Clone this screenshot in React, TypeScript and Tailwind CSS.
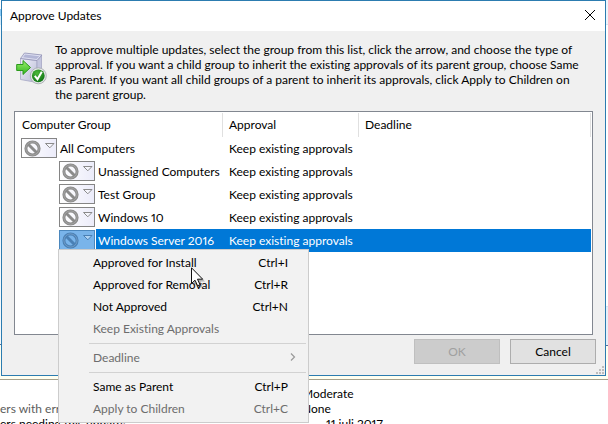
import React from 'react';
import clsx from 'clsx';

interface Group {
  name: string;
  child?: boolean;
  selected?: boolean;
}

interface MenuItem {
  label: string;
  shortcut?: string;
  disabled?: boolean;
  submenu?: boolean;
}

const GROUPS: Group[] = [
  { name: 'All Computers' },
  { name: 'Unassigned Computers', child: true },
  { name: 'Test Group', child: true },
  { name: 'Windows 10', child: true },
  { name: 'Windows Server 2016', child: true, selected: true },
];

const MENU_SECTIONS: MenuItem[][] = [
  [
    { label: 'Approved for Install', shortcut: 'Ctrl+I' },
    { label: 'Approved for Removal', shortcut: 'Ctrl+R' },
    { label: 'Not Approved', shortcut: 'Ctrl+N' },
    { label: 'Keep Existing Approvals', disabled: true },
  ],
  [{ label: 'Deadline', disabled: true, submenu: true }],
  [
    { label: 'Same as Parent', shortcut: 'Ctrl+P' },
    { label: 'Apply to Children', shortcut: 'Ctrl+C', disabled: true },
  ],
];

const ApproveIcon: React.FC = () => (
  <svg width="31" height="33" viewBox="0 0 31 33" className="shrink-0" aria-hidden="true">
    <defs>
      <linearGradient id="box" x1="0" y1="0" x2="1" y2="1">
        <stop offset="0" stopColor="#f0f0fa" />
        <stop offset="1" stopColor="#b9bbd6" />
      </linearGradient>
      <linearGradient id="arrow" x1="0" y1="0" x2="0" y2="1">
        <stop offset="0" stopColor="#9cf06c" />
        <stop offset="1" stopColor="#2fb41e" />
      </linearGradient>
      <radialGradient id="check" cx="0.4" cy="0.3" r="0.8">
        <stop offset="0" stopColor="#4cb83a" />
        <stop offset="1" stopColor="#0a6d12" />
      </radialGradient>
    </defs>
    <path d="M4.500 6.500L21 8.500V30.500L4.500 27.500Z" fill="url(#box)" stroke="#a4a6c4" strokeWidth="0.800" />
    <path d="M21 8.500L25.500 3.500V28L21 30.500Z" fill="#c3c5de" stroke="#a4a6c4" strokeWidth="0.800" />
    <path d="M4.500 6.500L8.500 1L26 3L21 8.500Z" fill="#dfe0f2" stroke="#8f91b4" strokeWidth="0.800" />
    <path d="M9 2.600L23.500 4.300L20.500 7L7 5.200Z" fill="#b3b6d6" />
    <path d="M0.700 12.500H7V8.500L14.500 15.500L7 22.500V18.500H0.700Z" fill="url(#arrow)" stroke="#2a9a1c" />
    <circle cx="22.300" cy="23.800" r="8" fill="#e4e6e8" stroke="#a0a4a8" strokeWidth="0.800" />
    <circle cx="22.300" cy="23.800" r="6.400" fill="url(#check)" />
    <path d="M18.800 23.800L21.500 27.300L25.800 19.800" fill="none" stroke="#fff" strokeWidth="2" />
  </svg>
);

const ApprovalButton: React.FC<{ group: Group }> = ({ group }) => (
  <button
    type="button"
    aria-label={`Approval for ${group.name}`}
    className={clsx(
      'flex h-5 w-9 items-start border pl-0.5 pt-px',
      group.selected
        ? 'border-[#4b87bd] bg-[#79b4ea] text-[#4a80b5]'
        : 'border-[#858585] bg-linear-to-r from-white to-[#ececfa] text-[#8b8b8b]',
    )}
  >
    <svg width="32" height="17" viewBox="0 0 32 17" fill="none" aria-hidden="true">
      <circle cx="8.500" cy="8.500" r="6.600" stroke="currentColor" strokeWidth="3" />
      <path d="M4 4L13 13" stroke="currentColor" strokeWidth="3" />
      <circle cx="8.500" cy="8.500" r="6.600" stroke="#fff" strokeOpacity="0.200" />
      <path d="M21.500 3.500H30L25.800 7.800Z" fill="#fff" fillOpacity="0.400" stroke="currentColor" />
    </svg>
  </button>
);

const Pointer: React.FC = () => (
  <svg
    width="16"
    height="22"
    viewBox="0 0 16 22"
    className="pointer-events-none absolute left-[132px] top-[17px]"
    aria-hidden="true"
  >
    <path d="M2.500 3V19L6 16L8.500 21L11.500 19.500L9.500 14.500H14Z" fill="#000" fillOpacity="0.250" />
    <path
      d="M0.500 0.800V16.500L4 13.200L6.600 18.800L9 17.700L6.500 12.200H11.700Z"
      fill="#fff"
      stroke="#111"
    />
  </svg>
);

const ApprovalMenu: React.FC = () => (
  <div
    role="menu"
    className="absolute -left-px top-[19px] z-10 w-[251px] border border-[#cccccc] bg-[#f2f2f2] p-0.5 text-black"
  >
    {MENU_SECTIONS.map((items, i) => (
      <React.Fragment key={items[0].label}>
        {i > 0 && <hr className="my-[3px] ml-7 border-[#d2d2d2]" />}
        {items.map((item) => (
          <button
            key={item.label}
            type="button"
            role="menuitem"
            disabled={item.disabled}
            className="flex h-[22px] w-full items-center justify-between pb-0.5 pl-8 pr-[18px] disabled:text-[#6d6d6d]"
          >
            <span>{item.label}</span>
            {item.shortcut && <span>{item.shortcut}</span>}
            {item.submenu && (
              <svg width="6" height="8" viewBox="0 0 6 8" className="-mr-2" fill="none" aria-hidden="true">
                <path d="M1 0.500L4.500 4L1 7.500" stroke="#9a9a9a" strokeWidth="1.200" />
              </svg>
            )}
          </button>
        ))}
      </React.Fragment>
    ))}
    <Pointer />
  </div>
);

const GroupTable: React.FC = () => (
  <table className="w-full table-fixed border-collapse">
    <colgroup>
      <col className="w-52" />
      <col className="w-34" />
      <col />
    </colgroup>
    <thead>
      <tr className="text-left">
        {['Computer Group', 'Approval', 'Deadline'].map((title, i) => (
          <th key={title} className="h-[25px] p-0 font-normal">
            <div
              className={clsx('h-6 border-r border-[#e0e0e0] leading-6', i === 0 ? 'pl-[7px]' : 'pl-1.5')}
            >
              {title}
            </div>
          </th>
        ))}
      </tr>
    </thead>
    <tbody>
      {GROUPS.map((group) => (
        <tr key={group.name} className={clsx(group.selected && 'text-white')}>
          <td className="p-0">
            <div className={clsx('flex h-[23px] gap-px', group.child ? 'pl-11' : 'pl-1.5')}>
              <div className="relative mt-px">
                <ApprovalButton group={group} />
                {group.selected && <ApprovalMenu />}
              </div>
              <span
                className={clsx(
                  'flex-1 whitespace-nowrap pl-0.5 leading-[23px]',
                  group.selected && 'bg-[#0078d7]',
                )}
              >
                {group.name}
              </span>
            </div>
          </td>
          <td className={clsx('whitespace-nowrap py-0 pl-1.5 pr-0', group.selected && 'bg-[#0078d7]')}>
            Keep existing approvals
          </td>
          <td className={clsx('p-0', group.selected && 'bg-[#0078d7]')} />
        </tr>
      ))}
    </tbody>
  </table>
);

// console window that shows round the edges of the dialog
const Backdrop: React.FC = () => (
  <div className="absolute inset-0 flex flex-col bg-white">
    <div className="flex h-[380px] justify-between border-b border-[#a5a08c] bg-[#fffff0]">
      <div className="flex w-4 flex-col">
        <div className="h-[9px] bg-white" />
        <div className="h-[7px] bg-[#8accf7]" />
        <div className="h-[9px] bg-[#d5ecfb]" />
        <div className="h-[320px] border-b border-[#5a6e96] bg-[#f4f9fd]" />
      </div>
      <div className="flex w-4 flex-col">
        <div className="h-[25px] border-b border-[#d5e5f3] bg-[#edf5fc]" />
        <div className="h-[281px] bg-white" />
        <div className="h-10 border-y border-b-[#5a6e96] border-t-[#d5e5f3] bg-[#e6f0f9]" />
      </div>
    </div>
    <div className="flex flex-1 overflow-hidden">
      <div className="w-[302px] pt-[21px] leading-[15px]">
        <p className="text-[#5c5c5c]">ers with errors:</p>
        <p>ers needing this update:</p>
      </div>
      <div className="pt-1.5 leading-[15px]">
        <p>Moderate</p>
        <p>None</p>
        <p className="pl-6">11 juli 2017</p>
      </div>
    </div>
  </div>
);

const SizeGrip: React.FC = () => (
  <svg width="8" height="8" viewBox="0 0 8 8" className="absolute bottom-px right-px" fill="#bdbdbd" aria-hidden="true">
    <path d="M6 0h2v2h-2zM3 3h2v2h-2zM6 3h2v2h-2zM0 6h2v2h-2zM3 6h2v2h-2zM6 6h2v2h-2z" />
  </svg>
);

const App: React.FC = () => {
  return (
    <div className="relative min-h-screen overflow-hidden font-[Lato,'Open_Sans',sans-serif] text-[12px] leading-[15px] text-black [font-feature-settings:'liga'_0,'pnum'_1]">
      <Backdrop />
      <div
        role="dialog"
        aria-labelledby="dialog-title"
        className="relative ml-px mr-0.5 border border-[#2c7cb0] bg-[#f0f0f0]"
      >
        <header className="flex h-[30px] items-center justify-between bg-white pb-0.5 pl-2 pr-2.5">
          <h1 id="dialog-title">Approve Updates</h1>
          <button type="button" aria-label="Close">
            <svg width="10" height="10" viewBox="0 0 10 10" stroke="#000" aria-hidden="true">
              <path d="M0 0L10 10M10 0L0 10" />
            </svg>
          </button>
        </header>

        <div className="px-3 pb-[11px] pt-[11px]">
          <div className="flex items-start gap-2 pl-0.5 pr-2">
            <div className="pt-2.5">
              <ApproveIcon />
            </div>
            <p className="flex-1">
              To approve multiple updates, select the group from this list, click the arrow, and choose the type of
              approval. If you want a child group to inherit the existing approvals of its parent group, choose Same
              as Parent. If you want all child groups of a parent to inherit its approvals, click Apply to Children on
              the parent group.
            </p>
          </div>

          <div className="mt-[9px] min-h-56 border border-[#828790] bg-white pr-px">
            <GroupTable />
          </div>

          <div className="-mr-[3px] mt-1 flex justify-end gap-2.5">
            <button
              type="button"
              disabled
              className="h-[25px] w-[86px] border border-[#bfbfbf] bg-[#cccccc] text-[#a0a0a0]"
            >
              OK
            </button>
            <button type="button" className="h-[25px] w-[86px] border border-[#adadad] bg-[#e1e1e1]">
              Cancel
            </button>
          </div>
        </div>
        <SizeGrip />
      </div>
    </div>
  );
};

export default App;
